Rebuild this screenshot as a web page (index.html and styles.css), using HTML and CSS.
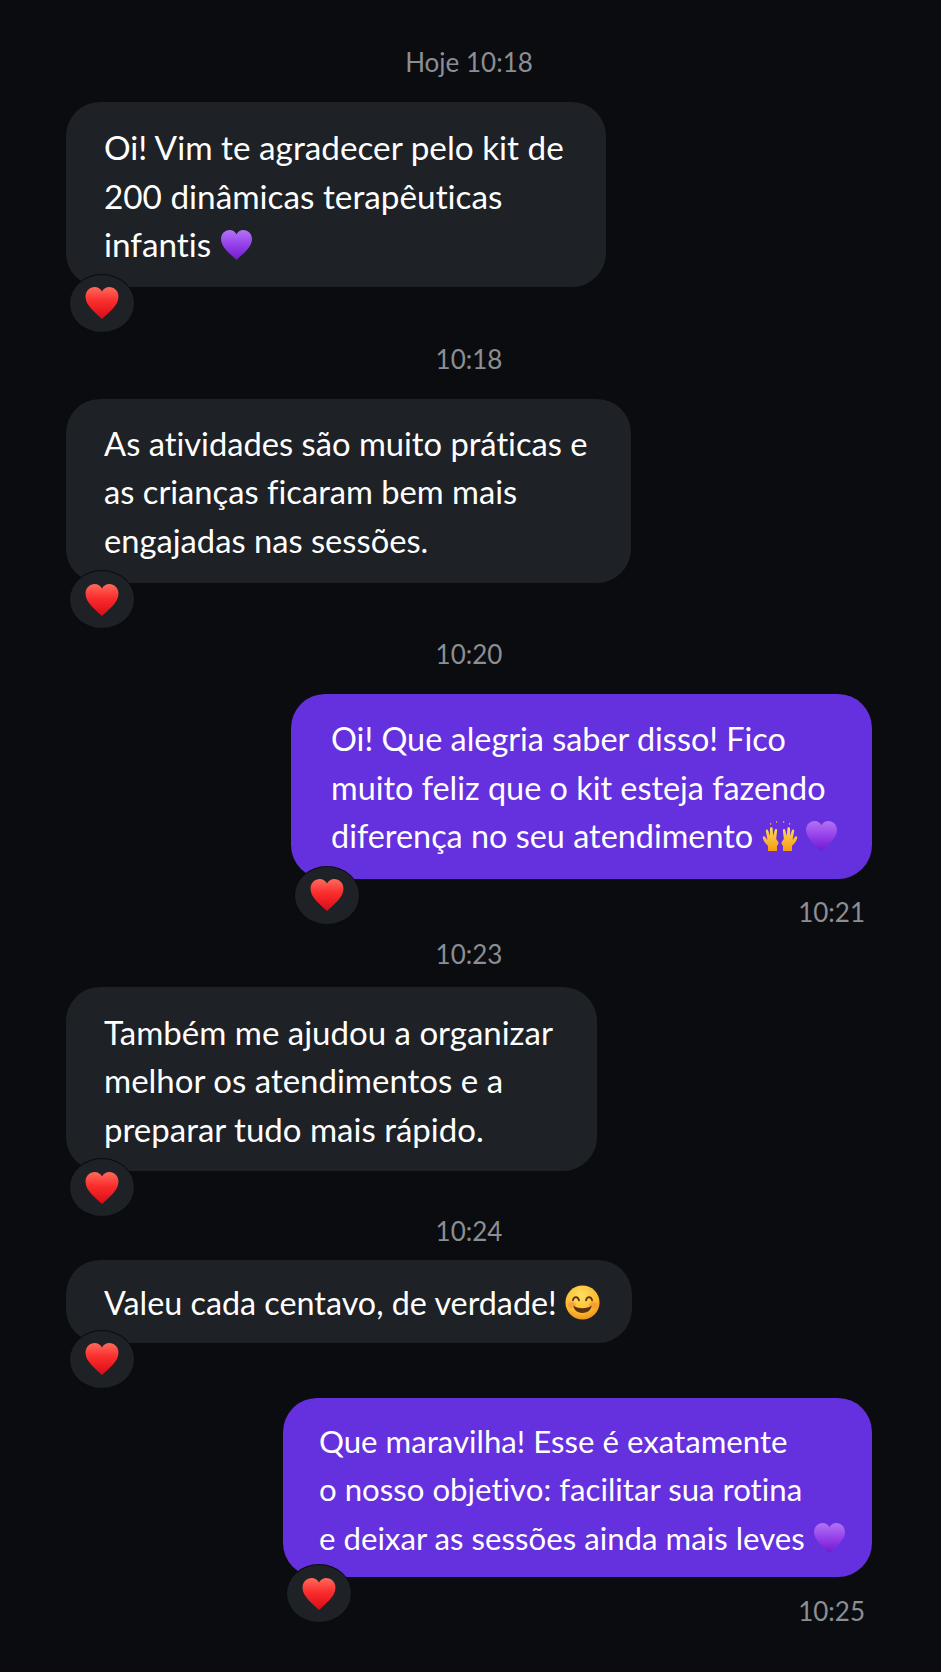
FILE: index.html
```html
<!DOCTYPE html>
<html lang="pt-BR">
<head>
  <meta charset="UTF-8">
  <title>Conversa</title>
  <link rel="stylesheet" href="styles.css">
</head>
<body>

  <!-- Shared emoji drawings -->
  <svg class="defs" width="0" height="0" aria-hidden="true">
    <defs>
      <linearGradient id="red" x1="0" y1="0" x2="0" y2="1">
        <stop offset="0" stop-color="#ff6a5c"/>
        <stop offset=".45" stop-color="#fa2c2c"/>
        <stop offset="1" stop-color="#d80c18"/>
      </linearGradient>
      <linearGradient id="violet" x1="0" y1="0" x2="0" y2="1">
        <stop offset="0" stop-color="#b274f5"/>
        <stop offset=".5" stop-color="#9440ea"/>
        <stop offset="1" stop-color="#7418cf"/>
      </linearGradient>
      <linearGradient id="gold" x1="0" y1="0" x2="0" y2="1">
        <stop offset="0" stop-color="#ffdc5a"/>
        <stop offset="1" stop-color="#f59a14"/>
      </linearGradient>
      <radialGradient id="face" cx=".45" cy=".3" r=".8">
        <stop offset="0" stop-color="#ffdf62"/>
        <stop offset=".6" stop-color="#fcbb30"/>
        <stop offset="1" stop-color="#ee8410"/>
      </radialGradient>
      <symbol id="heart" viewBox="0 0 32 32">
        <path d="M16 31C10 25 0.500 18.500 0.500 10C0.500 4.800 4.500 1 9.200 1C12 1 14.600 2.600 16 5.200C17.400 2.600 20 1 22.800 1C27.500 1 31.500 4.800 31.500 10C31.500 18.500 22 25 16 31Z"/>
      </symbol>
      <symbol id="hands" viewBox="0 0 36 32">
        <path fill="url(#gold)" d="M6 31V26C3.500 23.500 1.500 21 0.800 18C0.300 16.400 2.300 15.600 3.200 17L5.500 20L3.800 11C3.500 9.400 5.700 8.800 6.200 10.400L7.800 16L8 8.500C8 6.800 10.500 6.800 10.600 8.500L11.200 16L12.800 10C13.200 8.400 15.300 8.900 15.100 10.500L14.200 19L16.200 22C17.200 23.800 15.600 25 15 26V31Z"/>
        <path fill="url(#gold)" d="M30 31V26C32.500 23.500 34.500 21 35.200 18C35.700 16.400 33.700 15.600 32.800 17L30.500 20L32.200 11C32.500 9.400 30.300 8.800 29.800 10.400L28.200 16L28 8.500C28 6.800 25.500 6.800 25.400 8.500L24.800 16L23.200 10C22.800 8.400 20.700 8.900 20.900 10.500L21.800 19L19.800 22C18.800 23.800 20.400 25 21 26V31Z"/>
        <path fill="#e8a62a" d="M8 3h1.200v1.800H8zM14 1h1.200v1.800H14zM21 1h1.200v1.800H21zM27 3h1.200v1.800H27z"/>
      </symbol>
      <symbol id="smile" viewBox="0 0 40 40">
        <circle cx="20" cy="20" r="19.500" fill="url(#face)"/>
        <ellipse cx="8" cy="23" rx="4.500" ry="3.500" fill="#f5703c" opacity=".4"/>
        <ellipse cx="32" cy="23" rx="4.500" ry="3.500" fill="#f5703c" opacity=".4"/>
        <path d="M9 17.500C10 12.500 15 12.500 16 17.500M24 17.500C25 12.500 30 12.500 31 17.500" fill="none" stroke="#5a3210" stroke-width="2" stroke-linecap="round"/>
        <path d="M9.500 23.500C14 27.500 26 27.500 30.500 23.500C29.500 29.500 25 32 20 32C15 32 10.500 29.500 9.500 23.500Z" fill="#5a3210"/>
      </symbol>
    </defs>
  </svg>

  <main class="chat">
    <p class="time">Hoje 10:18</p>
    <div class="bubble in msg-1">
      Oi! Vim te agradecer pelo kit de<br>200 dinâmicas terapêuticas<br>infantis <svg class="emoji violet"><use href="#heart"/></svg>
      <span class="react"><svg class="react-heart"><use href="#heart"/></svg></span>
    </div>

    <p class="time">10:18</p>
    <div class="bubble in msg-2">
      As atividades são muito práticas e<br>as crianças ficaram bem mais<br>engajadas nas sessões.
      <span class="react"><svg class="react-heart"><use href="#heart"/></svg></span>
    </div>

    <p class="time">10:20</p>
    <div class="bubble out msg-3">
      Oi! Que alegria saber disso! Fico<br>muito feliz que o kit esteja fazendo<br>diferença no seu atendimento <svg class="emoji hands"><use href="#hands"/></svg><svg class="emoji violet tight"><use href="#heart"/></svg>
      <span class="react"><svg class="react-heart"><use href="#heart"/></svg></span>
    </div>
    <p class="time time-out time-sent">10:21</p>

    <p class="time time-close">10:23</p>
    <div class="bubble in msg-4">
      Também me ajudou a organizar<br>melhor os atendimentos e a<br>preparar tudo mais rápido.
      <span class="react"><svg class="react-heart"><use href="#heart"/></svg></span>
    </div>

    <p class="time time-near">10:24</p>
    <div class="bubble in msg-5">
      Valeu cada centavo, de verdade! <svg class="emoji face"><use href="#smile"/></svg>
      <span class="react"><svg class="react-heart"><use href="#heart"/></svg></span>
    </div>

    <div class="bubble out msg-6">
      Que maravilha! Esse é exatamente<br>o nosso objetivo: facilitar sua rotina<br>e deixar as sessões ainda mais leves <svg class="emoji violet"><use href="#heart"/></svg>
      <span class="react"><svg class="react-heart"><use href="#heart"/></svg></span>
    </div>
    <p class="time time-out time-last">10:25</p>
  </main>

</body>
</html>
```

FILE: styles.css
```css
* {
  box-sizing: border-box;
}

html, body {
  margin: 0;
  padding: 0;
  height: 100%;
  overflow: hidden;
  background: #0a0c10;
  font-family: "Lato", "Liberation Sans", sans-serif;
  font-variant-ligatures: none;
  color: white;
}

.defs {
  position: absolute;
}

.chat {
  display: flex;
  flex-direction: column;
  align-items: flex-start;
  padding: 43px 69px 0 66px;
}

/* Timestamps */
.time {
  align-self: center;
  margin: 0 0 19px;
  padding-bottom: 2px;
  font-size: 26px;
  line-height: 38px;
  color: #8b8e92;
}

.time-out {
  align-self: flex-end;
  margin: 15px 7px 0 0;
}

.time-sent {
  margin-top: 14px;
  margin-bottom: 2px;
}

.time-close {
  margin-bottom: 12px;
}

.time-near {
  margin-bottom: 8px;
}

/* Bubbles */
.bubble {
  position: relative;
  padding: 21px 0 18px 38px;
  border-radius: 34px;
  line-height: 48.500px;
  white-space: nowrap;
}

.in {
  background: #1e2125;
}

.out {
  align-self: flex-end;
  background: #6530dd;
}

.msg-1 {
  width: 540px;
  margin-bottom: 53px;
  font-size: 33.300px;
}

.msg-2 {
  width: 565px;
  margin-bottom: 52px;
  font-size: 32.700px;
}

.msg-3 {
  width: 581px;
  padding-left: 40px;
  font-size: 32.400px;
}

.msg-4 {
  width: 531px;
  margin-bottom: 41px;
  font-size: 33px;
}

.msg-5 {
  width: 566px;
  margin-bottom: 55px;
  padding-top: 19px;
  padding-bottom: 15px;
  font-size: 32.300px;
}

.msg-6 {
  width: 589px;
  padding: 19px 0 15px 36px;
  font-size: 31.200px;
}

/* Inline emoji */
.emoji {
  width: 33px;
  height: 32px;
  vertical-align: -4px;
}

.violet {
  fill: url(#violet);
}

.hands {
  width: 36px;
}

.face {
  width: 35px;
  height: 35px;
  vertical-align: -5px;
}

.tight {
  margin-left: 7px;
}

/* Heart reaction sitting on the bubble's corner */
.react {
  position: absolute;
  left: 4px;
  bottom: -45px;
  display: flex;
  justify-content: center;
  align-items: center;
  width: 64px;
  height: 57px;
  border-radius: 50%;
  background: #1e2125;
  box-shadow: 0 0 0 1px #0a0c10;
}

.react-heart {
  width: 36px;
  height: 34px;
  fill: url(#red);
}
```
